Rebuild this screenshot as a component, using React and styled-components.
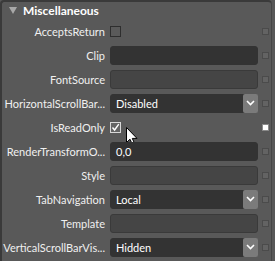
import React from "react";
import styled, { createGlobalStyle } from "styled-components";

const Global = createGlobalStyle`
  html, body { margin: 0; padding: 0; background: #575757; }
  body { font-family: Lato, "Noto Sans", sans-serif; }
`;

const Frame = styled.div`
  width: 275px;
  height: 261px;
  overflow: hidden;
  background: #575757;
`;

const Panel = styled.div`
  width: 269px;
  height: 259px;
  background: #595959;
  border-top: 2px solid #3a3a3a;
  border-left: 2px solid #3a3a3a;
  border-right: 1px solid #454545;
  border-radius: 4px 4px 0 0;
  display: flex;
  flex-direction: column;
`;

const Header = styled.div`
  height: 17px;
  display: flex;
  align-items: center;
  gap: 6px;
  padding-left: 7px;
  color: #ffffff;
  font-weight: 700;
  font-size: 12px;
`;

const Row = styled.div`
  height: 24px;
  display: grid;
  grid-template-columns: 102px 148px 7px;
  column-gap: 4px;
  align-items: center;
  padding-left: 2px;
`;

const Label = styled.div`
  display: flex;
  justify-content: flex-end;
  color: #f0f0f0;
  font-size: 11px;
  white-space: nowrap;
  padding-right: 1px;
`;

const Box = styled.div`
  height: 19px;
  box-sizing: border-box;
  border-radius: 3px;
  background: ${(p) => (p.$light ? "#454545" : "#333333")};
  border: 1px solid ${(p) => (p.$light ? "#3a3a3a" : "#333333")};
  display: flex;
  align-items: center;
  padding-left: 5px;
  color: #ffffff;
  font-size: 11px;
  position: relative;
`;

const DropButton = styled.div`
  position: absolute;
  right: -1px;
  top: -1px;
  width: 15px;
  height: 19px;
  border-radius: 2px;
  background: #7b7b7b;
  display: flex;
  align-items: center;
  justify-content: center;
`;

const CheckCell = styled.div`
  display: flex;
  align-items: center;
  gap: 4px;
`;

const Check = styled.div`
  width: 11px;
  height: 11px;
  box-sizing: border-box;
  border: 1px solid ${(p) => (p.$checked ? "#d8d8d8" : "#2e2e2e")};
  background: ${(p) => (p.$checked ? "#646464" : "#5a5a5a")};
  display: flex;
  align-items: center;
  justify-content: center;
`;

const Marker = styled.div`
  width: 7px;
  height: 7px;
  box-sizing: border-box;
  border: 1px solid ${(p) => (p.$on ? "#8a8a8a" : "#4b4b4b")};
  background: ${(p) => (p.$on ? "#ffffff" : "#636363")};
`;

const CursorWrap = styled.div`
  position: relative;
  width: 0;
  height: 11px;
`;

const Cursor = styled.svg`
  position: absolute;
  left: 1px;
  top: 5px;
`;

const Chevron = () => (
  <svg width="9" height="6" viewBox="0 0 9 6">
    <path d="M1 1 L4.5 4.5 L8 1" fill="none" stroke="#ffffff" strokeWidth="1.6" />
  </svg>
);

const CheckMark = () => (
  <svg width="9" height="9" viewBox="0 0 9 9">
    <path d="M1.5 4.5 L3.6 7 L7.8 1.2" fill="none" stroke="#ffffff" strokeWidth="1.4" />
  </svg>
);

const rows = [
  { label: "AcceptsReturn", type: "check", checked: false },
  { label: "Clip", type: "box" },
  { label: "FontSource", type: "box", light: true },
  { label: "HorizontalScrollBar...", type: "drop", value: "Disabled" },
  { label: "IsReadOnly", type: "check", checked: true, cursor: true, on: true },
  { label: "RenderTransformO...", type: "box", value: "0,0" },
  { label: "Style", type: "box", light: true },
  { label: "TabNavigation", type: "drop", value: "Local" },
  { label: "Template", type: "box", light: true },
  { label: "VerticalScrollBarVis...", type: "drop", value: "Hidden" },
];

export default function App() {
  return (
    <>
      <Global />
      <Frame>
        <Panel>
          <Header>
            <svg width="8" height="7" viewBox="0 0 8 7">
              <path d="M0 0 H8 L4 7 Z" fill="#a8a8a8" />
            </svg>
            <span>Miscellaneous</span>
          </Header>
          {rows.map((r) => (
            <Row key={r.label}>
              <Label>{r.label}</Label>
              {r.type === "check" ? (
                <CheckCell>
                  <Check $checked={r.checked}>{r.checked && <CheckMark />}</Check>
                  {r.cursor && (
                    <CursorWrap>
                      <Cursor width="12" height="19" viewBox="0 0 12 19">
                        <path
                          d="M0.5 0.5 L0.5 15.5 L4 12.2 L6.6 18 L8.8 17 L6.3 11.4 L11 11.4 Z"
                          fill="#ffffff"
                          stroke="#000000"
                          strokeWidth="1"
                          strokeLinejoin="round"
                        />
                      </Cursor>
                    </CursorWrap>
                  )}
                </CheckCell>
              ) : (
                <Box $light={r.light}>
                  {r.value}
                  {r.type === "drop" && (
                    <DropButton>
                      <Chevron />
                    </DropButton>
                  )}
                </Box>
              )}
              <Marker $on={r.on} />
            </Row>
          ))}
        </Panel>
      </Frame>
    </>
  );
}
